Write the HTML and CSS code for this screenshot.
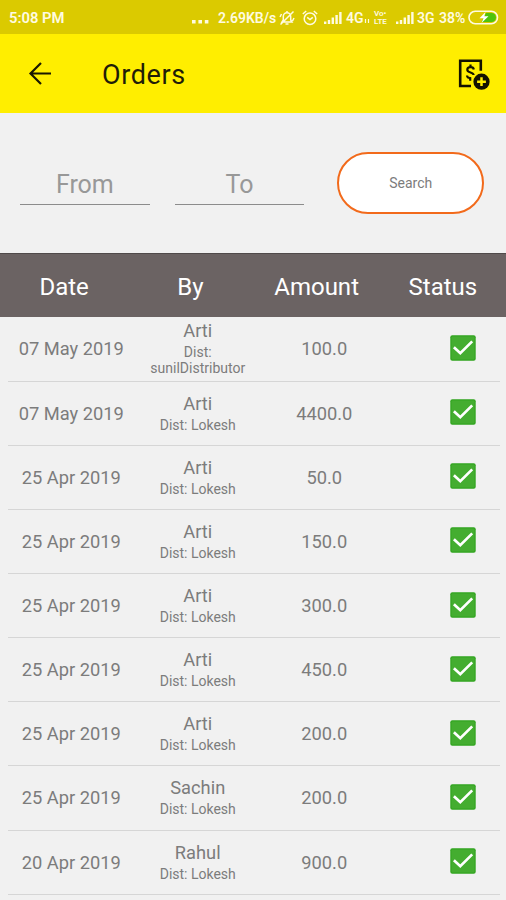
FILE: index.html
```
<!DOCTYPE html>
<html lang="en">
<head>
    <meta charset="UTF-8">
    <meta name="viewport" content="width=device-width, initial-scale=1.0">
    <title>Orders</title>
    <link rel="stylesheet" href="styles.css">
</head>
<body>
    <!-- Shared icons -->
    <svg class="icon-defs">
        <symbol id="check" viewBox="0 0 26 26">
            <rect x="0.3" y="0.3" width="25.4" height="25.4" rx="2" fill="#31a41f"/>
            <rect x="1.5" y="1.5" width="23" height="23" rx="1" fill="#44ad30"/>
            <path d="M3.9 12.2l6.4 6L22.2 6.4" fill="none" stroke="#fff" stroke-width="2.7"/>
        </symbol>
        <symbol id="signal" viewBox="0 0 18 12">
            <path d="M0 9.5h2.4V12H0zM3.8 8h2.4v4H3.8zM7.6 5.5H10V12H7.6zM11.4 3h2.4v9h-2.4zM15.2 0h2.4v12h-2.4z" fill="#fffbe0"/>
        </symbol>
    </svg>

    <div class="status-bar">
        <span class="time">5:08 PM</span>
        <svg class="dots" width="17" height="4" viewBox="0 0 17 4"><path d="M0 0h3.6v3.4H0zM6.4 0H10v3.4H6.4zM12.8 0h3.6v3.4h-3.6z" fill="#fffbe0"/></svg>
        <span>2.69KB/s</span>
        <svg width="16" height="16" viewBox="0 0 16 16" fill="none" stroke="#fffbe0" stroke-width="1.5">
            <path d="M3 12h10l-1.3-2V6.5a3.7 3.7 0 0 0-7.4 0V10zM6.5 14h3M8 1v2M1.5 14.5l13-13M1 7l1.5-3M15 8l-1.5 3"/>
        </svg>
        <svg width="16" height="16" viewBox="0 0 16 16" fill="none" stroke="#fffbe0" stroke-width="1.5">
            <circle cx="8" cy="8.7" r="5.8"/>
            <path d="M.8 4l3.4-3M15.2 4l-3.4-3M5.2 7.3L8 9.5l2.8-2.2"/>
        </svg>
        <svg width="18" height="12"><use href="#signal"/></svg>
        <span>4G</span>
        <svg class="data" width="6" height="4" viewBox="0 0 6 4"><path d="M1.5 0v4M4.5 0v4" stroke="#fffbe0" stroke-width="1.2"/></svg>
        <div class="volte">
            <span>Vo&#8226;</span>
            <span>LTE</span>
        </div>
        <svg width="18" height="12"><use href="#signal"/></svg>
        <span>3G</span>
        <span>38%</span>
        <svg width="31" height="15" viewBox="0 0 31 15">
            <rect x="1" y="1.3" width="28.5" height="12.4" rx="6.2" fill="none" stroke="#fffbe0" stroke-width="1.6"/>
            <path d="M18 3h5.5a4.5 4.5 0 0 1 0 9H13.5z" fill="#4fc40c"/>
            <path d="M17.5 2L11.5 8.2h4L13.5 13l7-6.7h-4.2z" fill="#fff"/>
        </svg>
    </div>

    <div class="toolbar">
        <svg class="back" width="24" height="24" viewBox="0 0 24 24" fill="none" stroke="#1a1800" stroke-width="2.2">
            <path d="M23 11.5H2.5M13 1L2.5 11.5 13 22"/>
        </svg>
        <h1>Orders</h1>
        <svg class="add-order" width="32" height="32" viewBox="0 0 32 32" fill="none" stroke="#141200">
            <path d="M13 28H2.2V2.8h20.6v10" stroke-width="2.6"/>
            <path d="M15.8 11.5c-.3-1.7-1.5-2.3-3.2-2.3-2 0-3.3.9-3.3 2.5 0 3.5 6.3 2 6.3 5.3M12.5 6.5v2.7M9 17.5c.2 1.8 1.5 2.6 3.2 2.7v2.5" stroke-width="2.2"/>
            <circle cx="23.5" cy="23.7" r="8.1" fill="#141200" stroke="none"/>
            <path d="M23.5 19.3v8.8M19.1 23.7h8.8" stroke="#ffee00" stroke-width="2.5"/>
        </svg>
    </div>

    <div class="filters">
        <div class="field">From</div>
        <div class="field">To</div>
        <button class="search-btn">Search</button>
    </div>

    <div class="table-head">
        <span>Date</span>
        <span>By</span>
        <span>Amount</span>
        <span>Status</span>
    </div>

    <div class="orders">
        <div class="order">
            <span>07 May 2019</span>
            <div class="by">Arti<small>Dist: sunilDistributor</small></div>
            <span>100.0</span>
            <svg class="check"><use href="#check"/></svg>
        </div>
        <div class="order">
            <span>07 May 2019</span>
            <div class="by">Arti<small>Dist: Lokesh</small></div>
            <span>4400.0</span>
            <svg class="check"><use href="#check"/></svg>
        </div>
        <div class="order">
            <span>25 Apr 2019</span>
            <div class="by">Arti<small>Dist: Lokesh</small></div>
            <span>50.0</span>
            <svg class="check"><use href="#check"/></svg>
        </div>
        <div class="order">
            <span>25 Apr 2019</span>
            <div class="by">Arti<small>Dist: Lokesh</small></div>
            <span>150.0</span>
            <svg class="check"><use href="#check"/></svg>
        </div>
        <div class="order">
            <span>25 Apr 2019</span>
            <div class="by">Arti<small>Dist: Lokesh</small></div>
            <span>300.0</span>
            <svg class="check"><use href="#check"/></svg>
        </div>
        <div class="order">
            <span>25 Apr 2019</span>
            <div class="by">Arti<small>Dist: Lokesh</small></div>
            <span>450.0</span>
            <svg class="check"><use href="#check"/></svg>
        </div>
        <div class="order">
            <span>25 Apr 2019</span>
            <div class="by">Arti<small>Dist: Lokesh</small></div>
            <span>200.0</span>
            <svg class="check"><use href="#check"/></svg>
        </div>
        <div class="order">
            <span>25 Apr 2019</span>
            <div class="by">Sachin<small>Dist: Lokesh</small></div>
            <span>200.0</span>
            <svg class="check"><use href="#check"/></svg>
        </div>
        <div class="order">
            <span>20 Apr 2019</span>
            <div class="by">Rahul<small>Dist: Lokesh</small></div>
            <span>900.0</span>
            <svg class="check"><use href="#check"/></svg>
        </div>
    </div>
</body>
</html>
```

FILE: styles.css
```
* {
    box-sizing: border-box;
}

body {
    margin: 0;
    height: 900px;
    overflow: hidden;
    background: #f1f1f1;
    font-family: Roboto, "Liberation Sans", sans-serif;
    color: #7c7c7c;
}

.icon-defs {
    display: none;
}

/* Phone status bar */
.status-bar {
    display: grid;
    grid-template-columns: 183px 26px 61px 23px 22px 22px 18px 10px 22px 21px 22px 29px 31px;
    align-items: center;
    height: 34px;
    padding: 1px 0 0 9px;
    background: #dbca00;
    color: #fffbe0;
    font-size: 14px;
    font-weight: 600;
    white-space: nowrap;
}

.status-bar .time {
    font-size: 14.8px;
}

.status-bar .dots {
    margin-top: 8px;
}

.status-bar .data {
    margin-top: 7px;
}

.volte {
    display: flex;
    flex-direction: column;
    font-size: 8px;
    line-height: 8px;
}

/* Top toolbar */
.toolbar {
    display: flex;
    align-items: center;
    height: 79px;
    padding: 0 16px 0 28px;
    background: #ffee00;
}

.toolbar h1 {
    margin: 2px auto 0 50px;
    font-size: 27px;
    font-weight: 400;
    letter-spacing: 0.6px;
    color: #1f1d08;
}

/* Date filters */
.filters {
    display: flex;
    align-items: flex-start;
    height: 140px;
    padding: 39px 22px 0 20px;
}

.field {
    width: 130px;
    height: 52.5px;
    margin-right: 25px;
    padding-top: 18px;
    border-bottom: 1.5px solid #8c8c8c;
    font-size: 25px;
    line-height: 30px;
    text-align: center;
    color: #989898;
}

.search-btn {
    width: 147px;
    height: 62px;
    margin-left: 8px;
    border: 2.5px solid #f26a1b;
    border-radius: 31px;
    background: #fff;
    font-family: inherit;
    font-size: 14px;
    color: #7c7c7c;
}

/* Orders table */
.table-head {
    display: grid;
    grid-template-columns: repeat(4, 1fr);
    align-items: center;
    height: 64px;
    padding: 2px 0 0 1px;
    border-top: 1px solid #504a4a;
    background: #6b6363;
    font-size: 24px;
    text-align: center;
    color: #fff;
}

.orders {
    padding: 0.4px 6px 0 8px;
}

.order {
    display: grid;
    grid-template-columns: repeat(3, 126.5px) 1fr;
    align-items: center;
    height: 64.15px;
    border-bottom: 1px solid #d6d6d6;
    font-size: 18.3px;
    text-align: center;
}

.by {
    padding: 0 14px;
    line-height: 20px;
}

.by small {
    display: block;
    padding-top: 3px;
    font-size: 14px;
    line-height: 16px;
}

.check {
    width: 26px;
    height: 26px;
    margin: -2px 0 0 62px;
}
```
